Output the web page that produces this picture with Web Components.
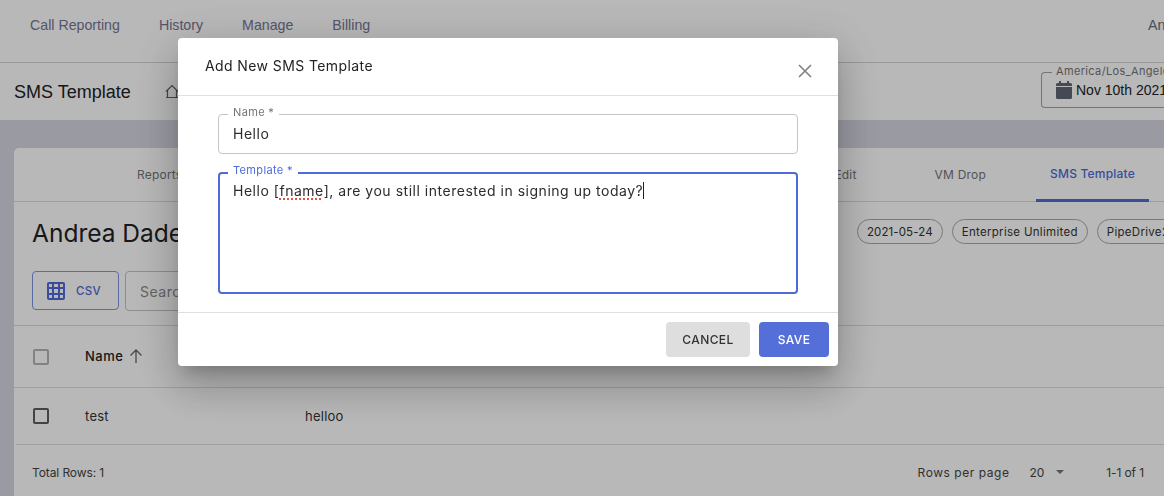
<!DOCTYPE html>
<html>
<head>
<meta charset="utf-8">
<title>SMS Template</title>
<style>
  html, body { margin: 0; height: 100%; overflow: hidden; }
  body { background: #d6d6e2; font-family: Inter, "Liberation Sans", sans-serif; color: #222; }
</style>
</head>
<body>
<app-nav></app-nav>
<page-header></page-header>
<data-card></data-card>
<sms-dialog></sms-dialog>

<script>
class AppNav extends HTMLElement {
  constructor() {
    super();
    this.attachShadow({ mode: 'open' }).innerHTML = `
      <style>
        :host { display: flex; align-items: center; height: 62px; padding: 0 0 0 30px; background: #fff;
          border-bottom: 1px solid #d4d4d4; font: 14.2px "Liberation Sans", sans-serif; color: #767694; position: relative; }
        a { margin-right: 39px; padding-bottom: 13px; }
        .user { position: absolute; left: 1148px; top: 17px; color: #6b6b7c; }
      </style>
      <a>Call Reporting</a><a>History</a><a>Manage</a><a>Billing</a>
      <span class="user">An</span>`;
  }
}

class PageHeader extends HTMLElement {
  constructor() {
    super();
    this.attachShadow({ mode: 'open' }).innerHTML = `
      <style>
        :host { display: flex; align-items: center; height: 57px; padding-left: 14px; background: #fff;
          font: 18px "Liberation Sans", sans-serif; color: #222; }
        h1 { font: inherit; margin: 2px 35px 0 0; width: 116px; white-space: nowrap; }
        svg { display: block; flex: none; }
        .wrap { margin-left: auto; margin-top: -3px; position: relative; }
        .date { width: 123px; height: 36px; box-sizing: border-box; border: 1px solid #a3a3a3; border-right: 0; border-radius: 4px 0 0 4px;
          display: flex; align-items: center; padding-left: 14px; gap: 4px; font-size: 14px; white-space: nowrap; overflow: hidden; }
        label { position: absolute; left: 11px; top: -8px; background: #fff; padding: 0 4px; font: 11px Inter, sans-serif; letter-spacing: .35px; color: #757575; white-space: nowrap; width: 108px; overflow: hidden; }
      </style>
      <h1>SMS Template</h1>
      <svg width="14" height="15" viewBox="0 0 14 15" fill="none" stroke="#5b6270" stroke-width="1.2"><path d="M1 7.5 7 1.5l6 6M2.500 6.500v7h9v-7M1 13.500h12"/></svg>
      <div class="wrap">
        <div class="date">
          <svg width="16" height="18" viewBox="0 0 16 18"><path fill="#5f6675" d="M3 0h2v2h6V0h2v2h1.500A1.500 1.500 0 0 1 16 3.500V5H0V3.500A1.500 1.500 0 0 1 1.500 2H3zM0 6h16v10.500a1.500 1.500 0 0 1-1.500 1.500h-13A1.500 1.500 0 0 1 0 16.500z"/></svg>
          <span>Nov 10th 2021</span>
        </div>
        <label>America/Los_Angeles</label>
      </div>`;
  }
}

class TabBar extends HTMLElement {
  constructor() {
    super();
    this.attachShadow({ mode: 'open' }).innerHTML = `
      <style>
        :host { display: flex; height: 53px; border-bottom: 1px solid #dadada; font: 12px Inter, sans-serif; letter-spacing: .2px; color: #757575; padding-left: 123px; }
        span { display: flex; align-items: center; box-sizing: border-box; height: 54px; white-space: nowrap; padding-bottom: 1px; }
        .space { flex: 1; }
        .edit { margin-right: 78px; }
        .vm { margin-right: 50px; }
        .on { color: #4f6bd8; font-weight: 500; width: 113px; justify-content: center; margin-right: 15px; border-bottom: 3px solid #4f6bd8; }
      </style>
      <span>Reports</span>
      <span class="space"></span>
      <span class="edit">Edit</span>
      <span class="vm">VM Drop</span>
      <span class="on">SMS Template</span>`;
  }
}

class StatusChip extends HTMLElement {
  constructor() {
    super();
    this.attachShadow({ mode: 'open' }).innerHTML = `
      <style>
        :host { display: inline-flex; align-items: center; box-sizing: border-box; height: 25px; padding: 0 9px; border: 1px solid #a8a8a8;
          border-radius: 13px; font: 11.5px Inter, sans-serif; letter-spacing: .3px; color: #333; white-space: nowrap; flex: none; }
      </style>
      <slot></slot>`;
  }
}

class CheckBox extends HTMLElement {
  constructor() {
    super();
    this.attachShadow({ mode: 'open' }).innerHTML = `
      <style>
        :host { display: block; width: 16px; height: 16px; box-sizing: border-box; border: 2px solid #5e5e5e; border-radius: 2px; }
        :host([disabled]) { border-color: #b5b5b5; }
      </style>`;
  }
}

class DataCard extends HTMLElement {
  constructor() {
    super();
    this.attachShadow({ mode: 'open' }).innerHTML = `
      <style>
        :host { display: block; margin: 28px 0 0 14px; background: #fff; border-radius: 5px 0 0 0; font: 13px Inter, sans-serif; color: #333; height: 360px; overflow: hidden; }
        .head { display: flex; align-items: center; height: 61px; padding: 0 0 0 18px; box-sizing: border-box; }
        h2 { margin: 0; font: 400 24.500px Inter, sans-serif; color: #222; white-space: nowrap; }
        .chips { margin: -2px 0 0 auto; display: flex; gap: 9px; width: 307px; overflow: hidden; }
        .chips :first-child { letter-spacing: .1px; }
        .tools { display: flex; gap: 6px; padding: 8px 0 0 18px; box-sizing: border-box; align-items: flex-start; height: 63px; border-bottom: 1px solid #dadada; }
        .csv { display: flex; align-items: center; gap: 11px; box-sizing: border-box; width: 87px; height: 39px; padding-left: 14px; border: 1px solid #7f95e2; border-radius: 4px;
          color: #4f6bd8; font-size: 11.500px; font-weight: 500; letter-spacing: .3px; }
        .search { box-sizing: border-box; width: 300px; height: 40px; border: 1px solid #c4c4c4; border-radius: 4px; padding-left: 14px; display: flex; align-items: center; color: #8a8a8a; font-size: 14px; letter-spacing: .5px; }
        .row { display: flex; align-items: center; padding-left: 19px; border-bottom: 1px solid #dedede; }
        .hdr { height: 61px; font-weight: 500; color: #222; }
        .body { height: 56px; margin-left: 2px; padding-left: 17px; }
        .name { margin-left: 36px; width: 220px; display: flex; align-items: center; gap: 5px; letter-spacing: .25px; padding-bottom: 1px; }
        .hdr .name { letter-spacing: .5px; gap: 5px; }
        .hello { letter-spacing: .25px; padding-bottom: 1px; }
        .foot { display: flex; align-items: center; height: 54px; padding-left: 18px; font-size: 12px; letter-spacing: -.1px; color: #444; }
        .pager { margin-left: auto; display: flex; align-items: center; padding-right: 20px; }
        .rpp { letter-spacing: .55px; margin-right: 20px; }
        .tri { width: 0; height: 0; border: 4.500px solid transparent; border-top-color: #757575; border-bottom: 0; margin: 0 42px 0 12px; }
        svg { flex: none; }
      </style>
      <tab-bar></tab-bar>
      <div class="head">
        <h2>Andrea Dade</h2>
        <div class="chips">
          <status-chip>2021-05-24</status-chip>
          <status-chip>Enterprise Unlimited</status-chip>
          <status-chip>PipeDrive2</status-chip>
        </div>
      </div>
      <div class="tools">
        <div class="csv">
          <svg width="18" height="18" viewBox="0 0 18 18"><path fill="#4f6bd8" d="M2 0h14a2 2 0 0 1 2 2v14a2 2 0 0 1-2 2H2a2 2 0 0 1-2-2V2a2 2 0 0 1 2-2zm0 2v3h3V2zm5 0v3h4V2zm6 0v3h3V2zM2 7v4h3V7zm5 0v4h4V7zm6 0v4h3V7zM2 13v3h3v-3zm5 0v3h4v-3zm6 0v3h3v-3z"/></svg>
          <span>CSV</span>
        </div>
        <div class="search">Search</div>
      </div>
      <div class="row hdr">
        <check-box disabled></check-box>
        <div class="name">Name
          <svg width="16" height="16" viewBox="0 0 16 16" fill="none" stroke="#666" stroke-width="1.3"><path d="M8 15V2M2.500 7.500 8 2l5.500 5.500"/></svg>
        </div>
      </div>
      <div class="row body">
        <check-box></check-box>
        <div class="name">test</div>
        <div class="hello">helloo</div>
      </div>
      <div class="foot">
        <span>Total Rows: 1</span>
        <div class="pager"><span class="rpp">Rows per page</span><span>20</span><i class="tri"></i><span>1-1 of 1</span></div>
      </div>`;
  }
}

class OutlinedField extends HTMLElement {
  constructor() {
    super();
    this.attachShadow({ mode: 'open' }).innerHTML = `
      <style>
        :host { display: block; position: relative; box-sizing: border-box; border: 1px solid #c4c4c4; border-radius: 4px; padding: 10px 14px 0; height: 40px; font: 14px Inter, sans-serif; letter-spacing: .52px; color: #2c2c2c; }
        :host([focused]) { border: 2px solid #4f6bd8; height: 122px; padding: 8px 13px 0; }
        label { position: absolute; left: 9px; top: -9px; padding: 0 5px; background: #fff; font-size: 11px; letter-spacing: .35px; line-height: 12px; color: #757575; }
        :host([focused]) label { left: 8px; top: -10px; color: #4f6bd8; }
      </style>
      <label></label><slot></slot>`;
  }
  connectedCallback() {
    this.shadowRoot.querySelector('label').textContent = this.getAttribute('label');
  }
}

class SmsDialog extends HTMLElement {
  constructor() {
    super();
    this.attachShadow({ mode: 'open' }).innerHTML = `
      <style>
        :host { position: fixed; inset: 0; display: block; background: rgba(0,0,0,.28); padding: 38px 0 0 178px; font: 14px Inter, sans-serif; }
        .box { width: 660px; height: 328px; background: #fff; border-radius: 4px; display: flex; flex-direction: column; color: #222;
          box-shadow: 0 11px 15px -7px rgba(0,0,0,.2), 0 24px 38px 3px rgba(0,0,0,.14), 0 9px 46px 8px rgba(0,0,0,.12); }
        header { display: flex; justify-content: space-between; height: 57px; box-sizing: content-box; padding: 0 26px 0 27px; border-bottom: 1px solid #dfdfdf; flex: none; font-size: 14px; letter-spacing: .4px; }
        header span { padding-top: 19px; }
        header svg { margin-top: 26px; }
        .fields { flex: 1; display: flex; flex-direction: column; gap: 18px; padding: 18px 40px 0; }
        footer { display: flex; justify-content: flex-end; gap: 9px; height: 54px; box-sizing: border-box; padding: 9px 9px 0; border-top: 1px solid #dfdfdf; flex: none; }
        button { border: 0; border-radius: 4px; height: 35px; font: 500 12px Inter, sans-serif; letter-spacing: .4px; }
        .cancel { width: 84px; background: #dedede; color: #333; }
        .save { width: 70px; background: #5470d8; color: #fff; }
        .typo { text-decoration: underline dotted #e0524a 2px; text-underline-offset: 2px; }
        .caret { border-right: 1px solid #222; }
      </style>
      <div class="box">
        <header>
          <span>Add New SMS Template</span>
          <svg width="14" height="14" viewBox="0 0 14 14" stroke="#808080" stroke-width="1.6"><path d="M1 1l12 12M13 1 1 13"/></svg>
        </header>
        <div class="fields">
          <outlined-field label="Name *">Hello</outlined-field>
          <outlined-field label="Template *" focused><span class="caret">Hello [<span class="typo">fname</span>], are you still interested in signing up today?</span></outlined-field>
        </div>
        <footer>
          <button class="cancel">CANCEL</button>
          <button class="save">SAVE</button>
        </footer>
      </div>`;
  }
}

customElements.define('app-nav', AppNav);
customElements.define('page-header', PageHeader);
customElements.define('tab-bar', TabBar);
customElements.define('status-chip', StatusChip);
customElements.define('check-box', CheckBox);
customElements.define('data-card', DataCard);
customElements.define('outlined-field', OutlinedField);
customElements.define('sms-dialog', SmsDialog);
</script>
</body>
</html>
